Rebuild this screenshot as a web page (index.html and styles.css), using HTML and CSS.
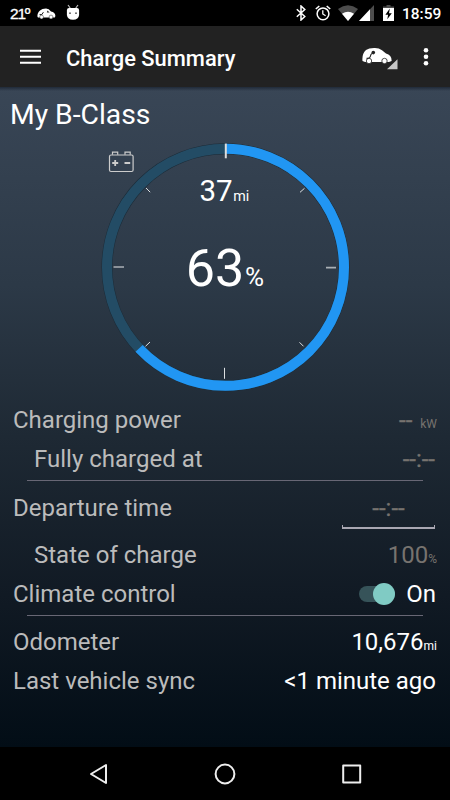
FILE: index.html
```html
<!DOCTYPE html>
<html lang="en">
<head>
    <meta charset="UTF-8">
    <meta name="viewport" content="width=device-width, initial-scale=1.0">
    <title>Charge Summary</title>
    <link rel="stylesheet" href="styles.css">
</head>
<body>

    <!-- Status Bar -->
    <div class="status-bar">
        <span class="temperature">21º</span>
        <svg class="status-car" width="19" height="12" viewBox="0 0 19 12">
            <path d="M.4 8.6 Q.2 4.6 3 2.4 Q5 .5 9 .5 Q12 .7 14 3.6 Q18.2 4.5 18.4 8 L17.8 9.4 H1 Z" fill="#fff"/>
            <circle cx="4.6" cy="9" r="1.9" fill="#fff" stroke="#000" stroke-width=".4"/>
            <circle cx="14" cy="9" r="1.9" fill="#fff" stroke="#000" stroke-width=".4"/>
            <path d="M2.6 6.6 H4.8 L6.4 4.2" fill="none" stroke="#000" stroke-width=".9"/>
            <path d="M10.5 2.4 L12.6 4.4 H9.8 Z" fill="#222"/>
        </svg>
        <svg class="status-cat" width="14" height="17" viewBox="0 0 14 17">
            <path d="M2 1 L4.2 4 M12 1 L9.8 4" stroke="#bbb" stroke-width="1.2"/>
            <path d="M.9 6 Q1 4 3 4 H11 Q13 4 13.1 6 V11 Q12.6 15.7 7 15.7 Q1.4 15.7 .9 11 Z" fill="#fff"/>
            <circle cx="4" cy="9.2" r=".9" fill="#555"/>
            <circle cx="10" cy="9.2" r=".9" fill="#555"/>
        </svg>
        <span class="spacer"></span>
        <svg class="bluetooth" width="10" height="16" viewBox="0 0 10 16">
            <path d="M.8 4.2 L8.8 11.5 L5 15 V1 L8.8 4.5 L.8 11.8" fill="none" stroke="#fff" stroke-width="1.5"/>
        </svg>
        <svg class="alarm" width="16" height="16" viewBox="0 0 16 16" fill="none" stroke="#fff">
            <circle cx="8" cy="8.8" r="5.9" stroke-width="1.5"/>
            <path d="M7.8 5.3 V9 L10.6 10.8" stroke-width="1.3"/>
            <path d="M.8 4 L4.3 1 M15.2 4 L11.7 1" stroke-width="1.6"/>
        </svg>
        <svg class="wifi" width="20" height="16" viewBox="0 0 20 16">
            <path d="M0 4 Q10 -3.4 20 4 L10 16 Z" fill="#4d4d4d"/>
            <path d="M4 8.8 Q10 4.8 16 8.8 L10 16 Z" fill="#fff"/>
        </svg>
        <svg class="signal" width="15" height="16" viewBox="0 0 15 16">
            <path d="M0 16 L15 0 V16 Z" fill="#4d4d4d"/>
            <path d="M0 16 L11 4.3 V16 Z" fill="#fff"/>
        </svg>
        <svg class="battery" width="11" height="16" viewBox="0 0 11 16">
            <path d="M3.5 0 H7.5 V1.5 H11 V4 H0 V1.5 H3.5 Z" fill="#4d4d4d"/>
            <path d="M0 3 H11 V16 H0 Z" fill="#fff"/>
            <path d="M6.8 3.6 L2.4 9.8 H5.1 L4.3 14.2 L8.8 8.2 H6 Z" fill="#000"/>
        </svg>
        <span class="clock">18:59</span>
    </div>

    <!-- Header -->
    <header>
        <svg class="menu-icon" width="21" height="16" viewBox="0 0 21 16">
            <path d="M0 1.7 H21 M0 7.7 H21 M0 13.7 H21" stroke="#fff" stroke-width="2"/>
        </svg>
        <h1>Charge Summary</h1>
        <svg class="car-icon" width="36" height="23" viewBox="0 0 36 23">
            <path d="M.5 14 Q-.3 7 4 3 Q7 .8 13 1 Q17 1 20 3.2 L24 6.4 Q29.8 7.6 29.6 14 L27 15 H3 Z" fill="#fff"/>
            <circle cx="7" cy="14" r="2.7" fill="#fff" stroke="#222" stroke-width=".8"/>
            <circle cx="22.5" cy="14" r="2.7" fill="#fff" stroke="#222" stroke-width=".8"/>
            <path d="M4.5 11.3 Q8 11.6 8.5 9 Q8.6 7.2 10 6.5" fill="none" stroke="#222" stroke-width="1.1"/>
            <circle cx="11.3" cy="5.6" r="1.8" fill="#222"/>
            <path d="M35.5 12.3 V22.3 H25 Z" fill="#c8c8c8"/>
        </svg>
        <svg class="more-icon" width="6" height="20" viewBox="0 0 6 20" fill="#fff">
            <circle cx="3" cy="3.3" r="2.3"/>
            <circle cx="3" cy="9.8" r="2.3"/>
            <circle cx="3" cy="16.3" r="2.3"/>
        </svg>
    </header>

    <main>
        <h2>My B-Class</h2>

        <!-- Charge Gauge, origin is the centre of the ring -->
        <svg class="gauge" width="450" height="258" viewBox="-225.5 -125.3 450 258">
            <circle class="ring-edge" r="118.5"/>
            <circle class="ring-track" r="118.5"/>
            <circle class="ring-value" r="118.5" pathLength="100" stroke-dasharray="63 37" transform="rotate(-90)"/>
            <path class="tick-start" d="M.3 -123.7 V-109"/>
            <path class="tick-main" d="M-112 -.3 H-101.5 M100.5 .3 H110.5"/>
            <path class="tick" d="M-1 100.5 V111.5 M-79.5 -79.3 L-75.3 -75.1 M74.5 -75 L79 -79 M-80 79 L-75.5 74.7 M74 75 L78 79"/>
            <g class="cell">
                <rect x="-116" y="-112.3" width="23.6" height="16.5" rx="1.5"/>
                <path d="M-113 -112.5 V-115.2 H-107.8 V-112.5 M-100.5 -112.5 V-115.2 H-95.3 V-112.5"/>
                <path class="cell-signs" d="M-113.3 -104.3 H-107.3 M-110.3 -107.3 V-101.3 M-101 -104.3 H-95.3"/>
            </g>
            <text class="range" x="-26" y="-66.8">37</text>
            <text class="range-unit" x="7.8" y="-66.8">mi</text>
            <text class="level" x="-39.8" y="18.3">63</text>
            <text class="level-unit" x="19.6" y="18.3">%</text>
        </svg>

        <!-- Details -->
        <section>
            <div class="row off">
                <span class="label">Charging power</span>
                <span class="dashes">--</span><span class="unit kw">kW</span>
            </div>
            <div class="row sub off">
                <span class="label">Fully charged at</span>
                <span class="value dashes">--:--</span>
            </div>
        </section>
        <section>
            <div class="row off">
                <span class="label">Departure time</span>
                <span class="time-field dashes">--:--</span>
            </div>
            <div class="row sub off soc">
                <span class="label">State of charge</span>
                <span>100</span><span class="unit">%</span>
            </div>
            <div class="row">
                <span class="label">Climate control</span>
                <span class="switch"><span class="thumb"></span></span>
                <span class="value on">On</span>
            </div>
        </section>
        <section class="vehicle">
            <div class="row">
                <span class="label">Odometer</span>
                <span>10,676</span><span class="unit">mi</span>
            </div>
            <div class="row">
                <span class="label">Last vehicle sync</span>
                <span class="value on">&lt;1 minute ago</span>
            </div>
        </section>
    </main>

    <!-- Navigation Bar -->
    <nav>
        <svg width="20" height="22" viewBox="0 0 20 22"><path d="M3 11 L18 2 V20 Z"/></svg>
        <svg width="22" height="22" viewBox="0 0 22 22"><circle cx="11" cy="11" r="9.4"/></svg>
        <svg width="20" height="22" viewBox="0 0 20 22"><rect x="1.2" y="2.6" width="17" height="17"/></svg>
    </nav>

</body>
</html>
```

FILE: styles.css
```css
/* Basic Reset */
* { margin: 0; padding: 0; box-sizing: border-box; }

body {
    width: 450px;
    height: 800px;
    overflow: hidden;
    font-family: Roboto, sans-serif;
    color: #fff;
    background-color: #000;
}
svg {
    display: block;
    flex: none;
}

/* Status Bar */
.status-bar {
    display: flex;
    align-items: center;
    height: 26px;
    padding: 0 9px 0 10px;
    background-color: #000;
}
.temperature {
    width: 27px;
    padding-top: 2px;
    font-family: "Liberation Sans", sans-serif;
    font-size: 15.5px;
    letter-spacing: -1.2px;
    -webkit-text-stroke: 0.3px #fff;
}
.status-car { margin-top: 1px; }
.status-cat { margin-left: 10px; margin-bottom: 2px; }
.spacer { flex: 1; }
.alarm { margin-left: 9px; }
.wifi { margin-left: 7px; }
.signal { margin-left: 1px; }
.battery { margin-left: 9px; }
.clock {
    width: 39px;
    margin-left: 8px;
    padding-top: 2px;
    font-weight: 500;
    font-size: 15.5px;
    white-space: nowrap;
}

/* Header */
header {
    display: flex;
    align-items: center;
    height: 61px;
    padding: 0 21px 0 20px;
    background-color: #222;
}
h1 {
    flex: 1;
    margin-left: 25px;
    padding-top: 3px;
    font-size: 21.9px;
    font-weight: 500;
}
.car-icon { margin-top: 4px; margin-right: 25px; }

/* Main */
main {
    height: 660px;
    background:
        linear-gradient(#202a38, transparent) 0 0 / 100% 4px no-repeat,
        linear-gradient(#394656, #2c3947 30%, #1e2934 53%, #111a24 77%, #020d16);
}
h2 {
    height: 55px;
    padding-left: 10px;
    font-size: 28.3px;
    font-weight: 400;
    line-height: 56px;
}

/* Gauge */
.gauge circle { fill: none; stroke-width: 10; }
.gauge .ring-edge { stroke: #1c2c38; stroke-width: 11; }
.ring-track { stroke: #25506a; opacity: 0.9; }
.ring-value { stroke: #2196f3; }
.tick-start { stroke: #ddd; stroke-width: 2; }
.tick-main { stroke: #aab0b5; stroke-width: 1.6; }
.tick { stroke: #dde0e2; stroke-width: 1; }
.cell { fill: none; stroke: #ccc; stroke-width: 1.2; }
.cell-signs { stroke-width: 1.8; }
.gauge text { fill: #fff; }
.range { font-size: 29.5px; }
.range-unit { font-size: 14.3px; }
.level { font-size: 52px; }
.level-unit { font-size: 26px; }

/* Detail Rows */
section + section {
    position: relative;
    padding-top: 10px;
}
section + section::before {
    content: "";
    position: absolute;
    top: 2px;
    left: 27px;
    right: 27px;
    height: 1px;
    background-color: #686775;
}
.row {
    display: flex;
    align-items: baseline;
    height: 39px;
    padding: 0 13px;
    font-size: 24px;
    line-height: 41px;
}
.label { flex: 1; color: #bbb; }
.sub { padding-left: 34px; }
.off { color: #77736f; }
.dashes { -webkit-text-stroke: 0.3px #77736f; }
.value { padding-right: 2px; }
.on { padding-right: 1px; }
.unit { font-size: 12px; }
.kw { margin-left: 8px; }

/* Underline with short upturned ends */
.time-field {
    width: 93px;
    height: 41px;
    margin-right: 2px;
    background:
        linear-gradient(#a9a7b2, #a9a7b2) 0 100% / 100% 2px no-repeat,
        linear-gradient(#a9a7b2, #a9a7b2) 0 100% / 1px 4px no-repeat,
        linear-gradient(#a9a7b2, #a9a7b2) 100% 100% / 1px 4px no-repeat;
    text-align: center;
}
.soc { margin-top: 8px; }
.vehicle .row { line-height: 39px; }

/* Switch */
.switch {
    align-self: center;
    display: flex;
    align-items: center;
    justify-content: flex-end;
    width: 36px;
    height: 16px;
    margin-right: 11px;
    border-radius: 8px;
    background-color: #365359;
}
.thumb {
    width: 22px;
    height: 22px;
    border-radius: 50%;
    background-color: #80cbc4;
}

/* Navigation Bar */
nav {
    display: flex;
    justify-content: space-between;
    align-items: center;
    height: 53px;
    padding: 0 88px;
}
nav svg { fill: none; stroke: #eee; stroke-width: 2; stroke-linejoin: round; }
```
